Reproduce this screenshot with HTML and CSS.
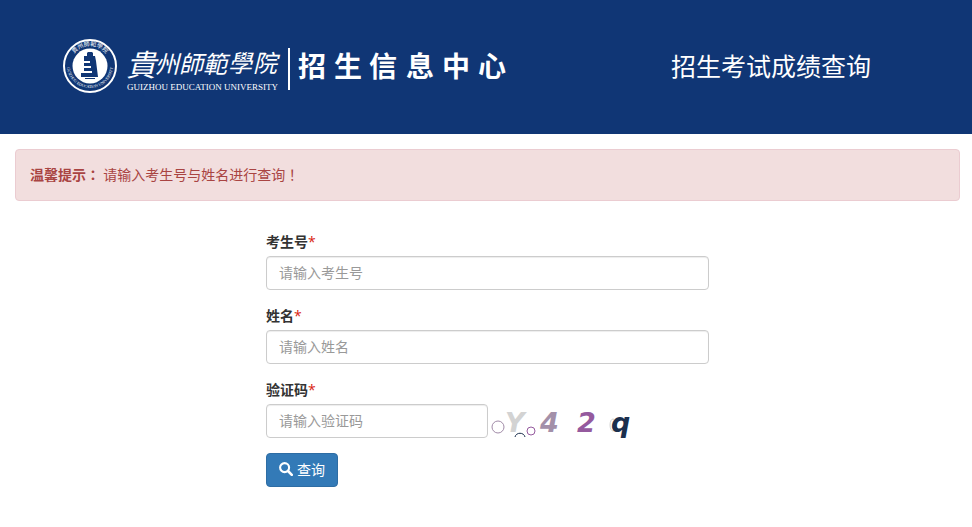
FILE: index.html
```
<!DOCTYPE html>
<html lang="zh-CN">
<head>
  <meta charset="UTF-8">
  <meta name="viewport" content="width=device-width, initial-scale=1.0">
  <title>招生考试成绩查询</title>
  <link rel="stylesheet" href="styles.css">
</head>
<body>
  <header class="header">
    <svg class="logo" width="448" height="58" viewBox="0 0 448 58" role="img" aria-label="贵州师范学院招生信息中心">
      <!-- school seal -->
      <circle cx="28" cy="28" r="26" fill="none" stroke="#fff" stroke-width="2"/>
      <circle cx="28" cy="28" r="17.5" fill="#fff"/>
      <path d="M25 15l1-1h4l1 1v3h2l1 5 2 16H19v-4l3-2V18h3zM23 40h10v1H23z" fill="#103675"/>
      <path d="M17 23h11v2H17zM17 28h12v2H17zM17 33h13v2H17z" fill="#fff"/>
      <path id="seal-top" d="M8 28a20 20 0 0 1 40 0" fill="none"/>
      <path id="seal-bottom" d="M5 27a23 23 0 0 0 46 0" fill="none"/>
      <text class="seal-name"><textPath href="#seal-top" startOffset="50%" text-anchor="middle">貴州師範學院</textPath></text>
      <text class="seal-english"><textPath href="#seal-bottom" startOffset="50%" text-anchor="middle">GUIZHOU EDUCATION UNIVERSITY</textPath></text>
      <!-- school name -->
      <text class="school-name" x="64 93 117 141 166 191" y="38 35 35 35 34 34"><tspan class="school-first">貴</tspan>州師範學院</text>
      <text class="school-english" x="65" y="52">GUIZHOU EDUCATION UNIVERSITY</text>
      <path d="M226 10h2v42h-2z" fill="#fff"/>
      <text class="center-name" x="236 272 307 344 380 416" y="39">招生信息中心</text>
    </svg>
    <h1 class="title">招生考试成绩查询</h1>
  </header>

  <main class="container">
    <div class="alert" role="alert">
      <strong>温馨提示<span class="mark" lang="zh-Hant">：</span></strong>
      请输入考生号与姓名进行查询<span class="mark" lang="zh-Hant">！</span>
    </div>

    <form class="query-form">
      <div class="form-group">
        <label for="ksh">考生号<span class="required">*</span></label>
        <input type="text" class="form-control" id="ksh" name="ksh" placeholder="请输入考生号">
      </div>
      <div class="form-group">
        <label for="xm">姓名<span class="required">*</span></label>
        <input type="text" class="form-control" id="xm" name="xm" placeholder="请输入姓名">
      </div>
      <div class="form-group">
        <label for="code">验证码<span class="required">*</span></label>
        <div class="code-row">
          <input type="text" class="form-control" id="code" name="code" placeholder="请输入验证码">
          <svg class="captcha" width="150" height="46" viewBox="0 -6 150 46" role="img" aria-label="验证码">
            <circle cx="7" cy="23" r="6" stroke="#a18ba8"/>
            <circle cx="40" cy="27" r="4" stroke="#955a9e"/>
            <path d="M24 33c1-5 9-5 10 0" stroke="#1b2f4d"/>
            <ellipse cx="122" cy="21" rx="3" ry="6" stroke="#d3d3d3"/>
            <text x="14" y="28" fill="#d3d3d3">Y</text>
            <text x="49" y="28" fill="#a390a9">4</text>
            <text x="86" y="28" fill="#955a9e">2</text>
            <text x="120" y="28" fill="#1b2f4d">q</text>
          </svg>
        </div>
      </div>
      <button type="button" class="btn">
        <svg width="14" height="14" viewBox="0 0 14 14" aria-hidden="true">
          <circle cx="5.6" cy="5.6" r="4.5" fill="none" stroke="#fff" stroke-width="2.1"/>
          <path d="M9 9l3.8 3.8" stroke="#fff" stroke-width="2.6" stroke-linecap="round"/>
        </svg>
        <span>查询</span>
      </button>
    </form>
  </main>
</body>
</html>
```
FILE: styles.css
```
* {
  box-sizing: border-box;
}

body {
  margin: 0;
  font-family: "Noto Sans CJK SC", sans-serif;
  font-size: 14px;
  line-height: 20px;
  color: #333;
  background: #fff;
}

.header {
  display: flex;
  align-items: center;
  justify-content: space-between;
  padding: 38px 101px 38px 62px;
  background: #103675;
  color: #fff;
}

.logo {
  display: block;
  fill: #fff;
}

.seal-name {
  font-size: 6px;
  font-family: "Noto Sans CJK TC", sans-serif;
}

.seal-english {
  font-size: 4px;
  font-family: "Liberation Serif", serif;
}

.school-name {
  font-family: "Noto Sans CJK TC", sans-serif;
  font-size: 24px;
  font-style: italic;
}

.school-first {
  font-size: 30px;
}

.school-english {
  font-family: "Liberation Serif", serif;
  font-size: 9px;
}

.center-name {
  font-size: 28px;
  font-weight: bold;
}

.title {
  margin: 0;
  padding-bottom: 4px;
  font-size: 25px;
  font-weight: normal;
  line-height: 36px;
}

.container {
  padding: 15px 12px 20px 15px;
}

.alert {
  margin-bottom: 30px;
  padding: 14px 14px 16px;
  border: 1px solid #ebccd1;
  border-radius: 4px;
  background: #f2dede;
  color: #a94442;
}

.mark {
  font-family: "Noto Sans CJK TC", sans-serif;
}

.query-form {
  max-width: 443px;
  margin: 0 auto;
}

.form-group {
  margin-bottom: 15px;
}

.form-group label {
  display: block;
  margin-bottom: 5px;
  font-weight: bold;
}

.required {
  color: #d9230f;
  font-family: "Open Sans", sans-serif;
  font-weight: normal;
  line-height: 1;
}

.form-control {
  display: block;
  width: 100%;
  height: 34px;
  padding: 5px 12px 7px;
  border: 1px solid #ccc;
  border-radius: 4px;
  box-shadow: inset 0 1px 1px rgba(0, 0, 0, 0.075);
  font: inherit;
  color: #555;
}

.form-control::placeholder {
  color: #999;
}

.form-control:focus {
  border-color: #66afe9;
  outline: 0;
}

.code-row {
  display: flex;
  align-items: center;
  gap: 3px;
  height: 34px;
}

.code-row .form-control {
  width: 50%;
}

.captcha {
  flex: none;
  fill: none;
  font-family: "DejaVu Sans", sans-serif;
  font-size: 27px;
  font-style: italic;
  font-weight: bold;
}

.btn {
  display: inline-flex;
  align-items: center;
  gap: 4px;
  padding: 5px 12px 7px;
  border: 1px solid #2e6da4;
  border-radius: 4px;
  background: #337ab7;
  color: #fff;
  font: inherit;
  cursor: pointer;
}

.btn:hover {
  background: #286090;
}
```
